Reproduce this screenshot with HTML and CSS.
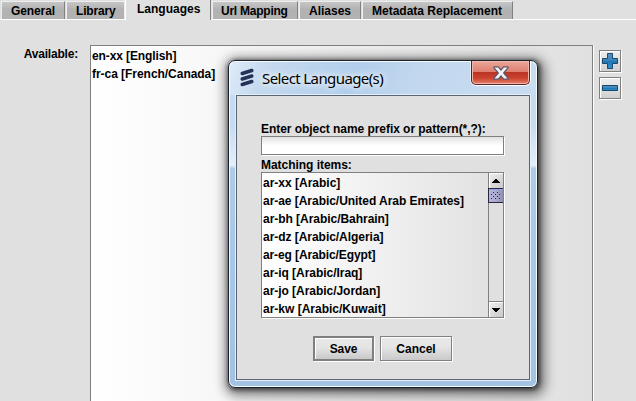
FILE: index.html
```html
<!DOCTYPE html>
<html lang="en">
<head>
<meta charset="utf-8">
<title>Languages</title>
<link rel="stylesheet" href="styles.css">
</head>
<body>
<nav class="tabs">
  <div class="tab general"><span>General</span></div>
  <div class="tab library"><span>Library</span></div>
  <div class="tab languages selected"><span>Languages</span></div>
  <div class="tab mapping"><span>Url Mapping</span></div>
  <div class="tab aliases"><span>Aliases</span></div>
  <div class="tab metadata"><span>Metadata Replacement</span></div>
</nav>
<main class="panel">
  <label class="available">Available:</label>
  <ul class="list available-list">
    <li class="tight">en-xx [English]</li>
    <li class="snug">fr-ca [French/Canada]</li>
  </ul>
  <div class="tools">
    <button class="tool" aria-label="Add">
      <svg width="18" height="18" viewBox="0 0 18 18"><defs><linearGradient id="blue" x1="0" y1="0" x2="0" y2="1"><stop offset="0" stop-color="#5593c2"/><stop offset=".48" stop-color="#3c83b8"/><stop offset=".52" stop-color="#1d74b4"/><stop offset="1" stop-color="#3492cf"/></linearGradient></defs><path d="M6.500 1.500h5v5h5v5h-5v5h-5v-5h-5v-5h5z" fill="url(#blue)" stroke="#16496f"/></svg>
    </button>
    <button class="tool" aria-label="Remove">
      <svg width="18" height="18" viewBox="0 0 18 18"><path d="M1.500 6.500h15v5h-15z" fill="url(#blue)" stroke="#16496f"/></svg>
    </button>
  </div>
</main>
<section class="dialog" role="dialog">
  <header class="titlebar">
    <svg class="logo" width="14" height="19" viewBox="0 0 14 19"><g stroke="#243258" stroke-width="3.500" stroke-linecap="round"><path d="M2.200 5.500 11.800 2.500M2.200 11 11.800 8M2.200 16.500 11.800 13.500"/></g></svg>
    <h1>Select Language(s)</h1>
    <button class="close" aria-label="Close">
      <svg width="16" height="14" viewBox="0 0 16 14"><path d="M1 .8h4.300L8 4 10.700.8H15v1L10.700 7l4.300 5.200v1h-4.300L8 10l-2.700 3.200H1v-1L5.300 7 1 1.800z" fill="#f2f2f2" stroke="#59566a" stroke-width="1.200" stroke-linejoin="round"/></svg>
    </button>
  </header>
  <div class="content">
    <label class="prompt">Enter object name prefix or pattern(*,?):</label>
    <input class="pattern" type="text">
    <label class="matching">Matching items:</label>
    <div class="list results">
      <ul>
        <li>ar-xx [Arabic]</li>
        <li class="snug">ar-ae [Arabic/United Arab Emirates]</li>
        <li class="snug">ar-bh [Arabic/Bahrain]</li>
        <li class="snug">ar-dz [Arabic/Algeria]</li>
        <li class="tight">ar-eg [Arabic/Egypt]</li>
        <li class="snug">ar-iq [Arabic/Iraq]</li>
        <li class="snug">ar-jo [Arabic/Jordan]</li>
        <li>ar-kw [Arabic/Kuwait]</li>
      </ul>
      <div class="scrollbar">
        <div class="arrow up"><svg width="8" height="4" viewBox="0 0 8 4"><path d="M3 0h2v1h1v1h1v1h1v1H0V3h1V2h1V1h1z"/></svg></div>
        <div class="thumb"><svg width="10" height="8" viewBox="0 0 10 8"><path stroke="#26264e" stroke-dasharray="1 3" d="M2 .5h8M0 2.500h10M2 4.500h8M0 6.500h10"/></svg></div>
        <div class="arrow down"><svg width="8" height="4" viewBox="0 0 8 4"><path d="M0 0h8v1H7v1H6v1H5v1H3V3H2V2H1V1H0z"/></svg></div>
      </div>
    </div>
    <div class="actions"><button class="save">Save</button><button class="cancel">Cancel</button></div>
  </div>
</section>
</body>
</html>
```
FILE: styles.css
```css
* { box-sizing: border-box; }
body { margin: 0; width: 636px; height: 401px; overflow: hidden; position: relative; background: #e0e0e0; color: #000; font: bold 12px/18px "Liberation Sans", Arial, sans-serif; }
ul { margin: 0; padding: 0; list-style: none; }
button { font: inherit; color: inherit; padding: 0; border: 0; border-radius: 0; }
svg { display: block; }
label, li, span, h1 { white-space: nowrap; }

.tabs { height: 20px; padding: 1px 0 0 1px; display: flex; gap: 1px; border-bottom: 1px solid #fff; }
.tab { height: 18px; line-height: 18px; border-left: 1px solid #eee; border-top: 1px solid #eee; border-right: 1px solid #808080; background: linear-gradient(#c6c6c6, #b2b2b2 45%, #b2b2b2); padding-left: 9px; }
.general { width: 64px; letter-spacing: -.1px; }
.library { width: 59px; border-right-color: #eee; letter-spacing: -.15px; }
.languages { width: 86px; padding-left: 11px; margin-left: -1px; }
.mapping { width: 86px; padding-left: 8px; letter-spacing: -.24px; }
.aliases { width: 62px; }
.metadata { width: 151px; }
.tab.selected { height: 20px; margin-top: -1px; line-height: 19px; background: #e0e0e0; border-top: 0; border-left-color: #fff; }

.panel { display: grid; grid-template-columns: 78px 516px 42px; height: 381px; }
.available { padding-top: 25px; text-align: right; letter-spacing: -.2px; }
.list { border: 1px solid #808080; background: linear-gradient(90deg, #fff, #e0e0e0); }
.available-list { margin: 25px 1px 0 12px; height: 366px; padding: 1px 0 0 1px; box-shadow: 1px 0 #fff; }
.available-list li, .results li { height: 18px; }
.tight { letter-spacing: -.11px; }
.snug { letter-spacing: -.04px; }
.tools { padding: 30px 0 0 5px; display: flex; flex-direction: column; gap: 5px; }
.tool { width: 22px; height: 22px; display: grid; place-items: center; flex: none; border: 1px solid #808080; box-shadow: inset 1px 1px #fff, 1px 1px #fff; background: linear-gradient(#eee, #d0d0d0); }

.dialog { position: absolute; left: 228px; top: 60px; width: 310px; height: 328px; border: 1px solid #1b222b; border-radius: 7px; padding: 0 7px 7px; background: linear-gradient(110deg, #e0ecf9 0, #c5daef 12%, #b2ceec 40%, #c2d8ee 62%, #c9ddf1) 0 0 / 100% 34px no-repeat, linear-gradient(#c5daf0 0, #c8dcf1 20%, #e5effa 32%, #b0cbe6 33%, #a8c8e9 60%, #a4c3e2 100%); box-shadow: inset 0 0 0 1px #f5faff, 1px 1px 4px 1px #222b, 2px 3px 12px 5px #0007; }
.titlebar { height: 34px; display: flex; position: relative; }
.logo { margin: 7px 0 0 4px; }
h1 { margin: 7px 0 0 8px; font: 15px/20px "Noto Sans", sans-serif; letter-spacing: -.6px; text-shadow: 0 0 6px #fff, 0 0 10px #fff; }
.close { position: absolute; right: 0; top: 0; width: 59px; height: 24px; border: 1px solid #56232a; border-top: 0; border-radius: 0 0 5px 5px; display: grid; place-items: center; background: linear-gradient(#eda799, #dc7e70 47%, #b93223 48%, #cc4431 75%, #e68169); box-shadow: inset 0 0 0 1px #f0b7aa, 0 1px #fff, 1px 0 #fff, -1px 0 #fff8; }
.content { height: 285px; border: 1px solid #596573; background: #e0e0e0; box-shadow: 0 0 0 1px #e5effa; padding: 24px 24px 0; display: flex; flex-direction: column; }
.prompt { height: 16px; letter-spacing: -.05px; }
.pattern { width: 243px; height: 19px; flex: none; padding: 0; margin: 0; border: 1px solid #808080; box-shadow: 1px 1px #fff; background: linear-gradient(#e1e1e1, #fff 50%); outline: 0; }
.matching { height: 17px; line-height: 20px; letter-spacing: -.04px; }
.results { width: 243px; height: 146px; flex: none; overflow: hidden; display: flex; justify-content: space-between; box-shadow: 1px 1px #fff; }
.results ul { padding: 1px 0 0 1px; }
.scrollbar { width: 15px; height: 144px; flex: none; border-left: 1px solid #808080; background: #e0e0e0; display: flex; flex-direction: column; }
.arrow { height: 15px; flex: none; display: grid; place-items: center; box-shadow: inset 1px 1px #fff; background: linear-gradient(135deg, #f0f0f0, #c8c8c8); }
.down { margin-top: auto; height: 16px; border-top: 1px solid #808080; }
.thumb { height: 15px; margin-left: -1px; flex: none; display: grid; place-items: center; border: 1px solid #28283d; border-right: 0; background: linear-gradient(90deg, #b4b4df, #aaaacf 50%, #8f8fb5); box-shadow: inset 0 1px #9d9dec; }
.actions { display: flex; gap: 6px; margin: 18px 0 0 52px; }
.save, .cancel { height: 25px; padding-top: 1px; border: 1px solid #808080; background: linear-gradient(#e9e9e9, #e4e4e4 45%, #c9c9c9); box-shadow: inset 1px 1px #fff, 1px 1px #fff; }
.save { width: 61px; border-width: 2px; letter-spacing: -.1px; }
.cancel { width: 72px; }
```
